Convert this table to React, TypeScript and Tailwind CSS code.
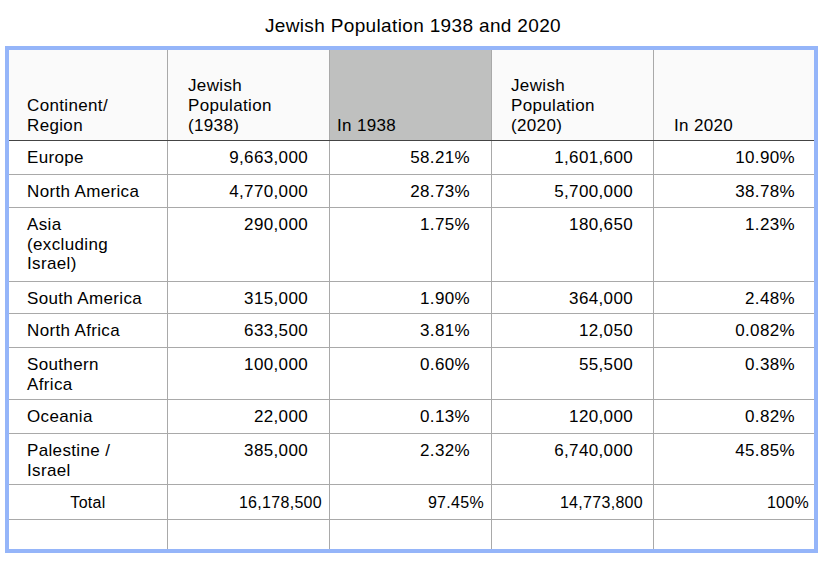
import React from "react";

type Row = { name: string[]; a: string; b: string; c: string; d: string; h: string };

const rows: Row[] = [
  { name: ["Europe"], a: "9,663,000", b: "58.21%", c: "1,601,600", d: "10.90%", h: "h-[34px]" },
  { name: ["North America"], a: "4,770,000", b: "28.73%", c: "5,700,000", d: "38.78%", h: "h-[33px]" },
  { name: ["Asia", "(excluding", "Israel)"], a: "290,000", b: "1.75%", c: "180,650", d: "1.23%", h: "h-[74px]" },
  { name: ["South America"], a: "315,000", b: "1.90%", c: "364,000", d: "2.48%", h: "h-[32px]" },
  { name: ["North Africa"], a: "633,500", b: "3.81%", c: "12,050", d: "0.082%", h: "h-[34px]" },
  { name: ["Southern", "Africa"], a: "100,000", b: "0.60%", c: "55,500", d: "0.38%", h: "h-[52px]" },
  { name: ["Oceania"], a: "22,000", b: "0.13%", c: "120,000", d: "0.82%", h: "h-[34px]" },
  { name: ["Palestine /", "Israel"], a: "385,000", b: "2.32%", c: "6,740,000", d: "45.85%", h: "h-[51px]" },
];

const grid = "grid grid-cols-[159px_162px_162px_162px_160px]";
const cell = "border-r border-[#a9a9a9] pt-[7px] leading-[19.5px]";

export default function App() {
  return (
    <div className="w-[826px] h-[563px] bg-white text-black font-['Liberation_Sans',Arial,sans-serif] text-[17px] tracking-[0.35px]">
      <div className="h-[46px] flex items-center justify-center text-[19px] tracking-[0.35px] pt-[6px]">
        Jewish Population 1938 and 2020
      </div>
      <div className="ml-[5px] w-[813px] border-4 border-[#95b5f9]">
        {/* header */}
        <div className={`${grid} h-[91px] bg-[#fafafa] border-b border-[#444]`}>
          <div className="border-r border-[#a9a9a9] flex flex-col justify-end pl-[18px] pb-[4px] leading-[20px]">
            <span>Continent/</span>
            <span>Region</span>
          </div>
          <div className="border-r border-[#a9a9a9] flex flex-col justify-end pl-[20px] pb-[4px] leading-[20px]">
            <span>Jewish</span>
            <span>Population</span>
            <span>(1938)</span>
          </div>
          <div className="border-r border-[#a9a9a9] bg-[#bfc0bf] flex flex-col justify-end pl-[7px] pb-[4px] leading-[20px]">
            <span>In 1938</span>
          </div>
          <div className="border-r border-[#a9a9a9] flex flex-col justify-end pl-[19px] pb-[4px] leading-[20px]">
            <span>Jewish</span>
            <span>Population</span>
            <span>(2020)</span>
          </div>
          <div className="flex flex-col justify-end pl-[20px] pb-[4px] leading-[20px]">
            <span>In 2020</span>
          </div>
        </div>
        {rows.map((r) => (
          <div key={r.name.join(" ")} className={`${grid} ${r.h} border-b border-[#a9a9a9]`}>
            <div className={`${cell} pl-[18px] flex flex-col`}>
              {r.name.map((n) => (
                <span key={n}>{n}</span>
              ))}
            </div>
            <div className={`${cell} text-right pr-[21px]`}>{r.a}</div>
            <div className={`${cell} text-right pr-[21px]`}>{r.b}</div>
            <div className={`${cell} text-right pr-[20px]`}>{r.c}</div>
            <div className="pt-[7px] leading-[19.5px] text-right pr-[19px]">{r.d}</div>
          </div>
        ))}
        {/* total */}
        <div className={`${grid} h-[35px] border-b border-[#a9a9a9] text-[16px] tracking-[0.3px]`}>
          <div className={`${cell} text-center pt-[8px]`}>Total</div>
          <div className={`${cell} text-right pr-[7px] pt-[8px]`}>16,178,500</div>
          <div className={`${cell} text-right pr-[7px] pt-[8px]`}>97.45%</div>
          <div className={`${cell} text-right pr-[10px] pt-[8px]`}>14,773,800</div>
          <div className="pt-[8px] leading-[19.5px] text-right pr-[5px]">100%</div>
        </div>
        {/* blank */}
        <div className={`${grid} h-[29px]`}>
          <div className="border-r border-[#a9a9a9]" />
          <div className="border-r border-[#a9a9a9]" />
          <div className="border-r border-[#a9a9a9]" />
          <div className="border-r border-[#a9a9a9]" />
          <div />
        </div>
      </div>
    </div>
  );
}
